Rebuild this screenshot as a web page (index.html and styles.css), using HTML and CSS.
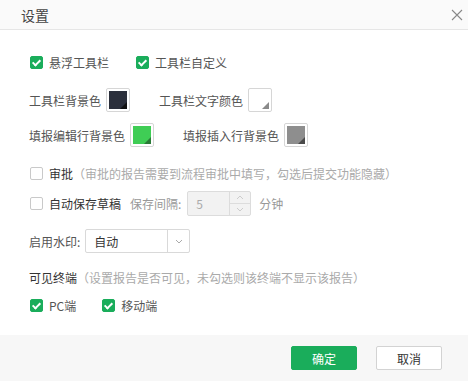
FILE: index.html
```html
<!DOCTYPE html>
<html lang="zh-CN">
<head>
    <meta charset="UTF-8">
    <title>设置</title>
    <link rel="stylesheet" href="styles.css">
</head>
<body>
    <div class="dialog">
        <div class="dialog-header">
            <span class="dialog-title">设置</span>
            <span class="close">
                <svg width="12" height="12" viewBox="0 0 12 12"><path d="M1 1L11 11M11 1L1 11" stroke="#888" stroke-width="1.1" fill="none"/></svg>
            </span>
        </div>
        <div class="dialog-body">
            <div class="row r1">
                <label class="check on"><i class="box"></i>悬浮工具栏</label>
                <label class="check on"><i class="box"></i>工具栏自定义</label>
            </div>
            <div class="row r2">
                <div class="color-item"><span>工具栏背景色</span><span class="swatch"><b class="fill dark"></b></span></div>
                <div class="color-item"><span>工具栏文字颜色</span><span class="swatch"><b class="fill white"></b></span></div>
            </div>
            <div class="row r3">
                <div class="color-item"><span>填报编辑行背景色</span><span class="swatch"><b class="fill green"></b></span></div>
                <div class="color-item"><span>填报插入行背景色</span><span class="swatch"><b class="fill grey"></b></span></div>
            </div>
            <div class="row r4">
                <label class="check"><i class="box"></i><span class="strong">审批</span><span class="hint">（审批的报告需要到流程审批中填写，勾选后提交功能隐藏）</span></label>
            </div>
            <div class="row r5">
                <label class="check"><i class="box"></i><span class="strong">自动保存草稿</span></label>
                <span class="muted">保存间隔:</span>
                <div class="spin">
                    <span class="spin-val">5</span>
                    <span class="spin-btns">
                        <span><svg width="8" height="5" viewBox="0 0 8 5"><path d="M1 4L4 1L7 4" stroke="#ccc" fill="none"/></svg></span>
                        <span><svg width="8" height="5" viewBox="0 0 8 5"><path d="M1 1L4 4L7 1" stroke="#ccc" fill="none"/></svg></span>
                    </span>
                </div>
                <span class="muted">分钟</span>
            </div>
            <div class="row r6">
                <span>启用水印:</span>
                <div class="select">
                    <span class="select-val">自动</span>
                    <span class="select-arrow"><svg width="8" height="5" viewBox="0 0 8 5"><path d="M1 1L4 4L7 1" stroke="#aaa" fill="none"/></svg></span>
                </div>
            </div>
            <div class="row r7">
                <span class="strong">可见终端</span><span class="hint">（设置报告是否可见，未勾选则该终端不显示该报告）</span>
            </div>
            <div class="row r8">
                <label class="check on"><i class="box"></i>PC端</label>
                <label class="check on"><i class="box"></i>移动端</label>
            </div>
        </div>
        <div class="dialog-footer">
            <button class="btn primary">确定</button>
            <button class="btn">取消</button>
        </div>
    </div>
</body>
</html>
```
FILE: styles.css
```css
body {
    margin: 0;
    font-family: "Noto Sans CJK SC", "Noto Sans", sans-serif;
    font-size: 12px;
    color: #555;
    background: #fff;
}

.dialog {
    width: 468px;
    height: 381px;
    display: flex;
    flex-direction: column;
    overflow: hidden;
}

.dialog-header {
    height: 29px;
    flex: none;
    display: flex;
    align-items: center;
    justify-content: space-between;
    padding: 0 5px 0 21px;
    background: #fafafa;
    border-bottom: 1px solid #e6e6e6;
}

.dialog-title {
    font-size: 14px;
    color: #444;
}

.close {
    display: flex;
}

.dialog-body {
    flex: 1;
    padding: 20px 29px 0;
}

.row {
    height: 24px;
    display: flex;
    align-items: center;
}

.r2 { margin-top: 14px; }
.r3 { margin-top: 11px; }
.r4 { margin-top: 14px; }
.r5 { margin-top: 6px; }
.r6 { margin-top: 14px; }
.r7 { margin-top: 12px; }
.r8 { margin-top: 4px; }

.check {
    display: flex;
    align-items: center;
    margin-right: 26px;
}

.box {
    width: 11px;
    height: 11px;
    border: 1px solid #c9c9c9;
    border-radius: 2px;
    margin: 0 6px 0 1px;
    background: #fff;
    position: relative;
}

.check.on .box {
    background: #1aad5b;
    border-color: #1aad5b;
}

.check.on .box::after {
    content: "";
    position: absolute;
    left: 3px;
    top: 1px;
    width: 3px;
    height: 6px;
    border: solid #fff;
    border-width: 0 2px 2px 0;
    transform: rotate(45deg);
}

.r8 .check { margin-right: 25px; }

.strong {
    color: #333;
}

.hint {
    color: #aaa;
}

.muted {
    color: #999;
}

.color-item {
    display: flex;
    align-items: center;
    gap: 5px;
    margin-right: 29px;
}

.swatch {
    width: 18px;
    height: 18px;
    padding: 2px;
    border: 1px solid #d6d6d6;
    border-radius: 2px;
    background: #fff;
    display: flex;
}

.fill {
    flex: 1;
    position: relative;
    overflow: hidden;
}

.fill::after {
    content: "";
    position: absolute;
    right: 0;
    bottom: 0;
    border-style: solid;
    border-width: 0 0 7px 7px;
    border-color: transparent transparent var(--corner) transparent;
}

.fill.dark { background: #2b2f3b; --corner: #111; }
.fill.white { background: #fff; --corner: #8a8a8a; }
.fill.green { background: #3fcd55; --corner: #2a7a37; }
.fill.grey { background: #8e8e8e; --corner: #4a4a4a; }

.r5 .check { margin-right: 9px; }

.spin {
    display: flex;
    height: 23px;
    width: 62px;
    border: 1px solid #dcdcdc;
    border-radius: 2px;
    background: #f2f2f2;
    margin: 0 8px 0 6px;
}

.spin-val {
    flex: 1;
    display: flex;
    align-items: center;
    padding-left: 8px;
    color: #aaa;
}

.spin-btns {
    width: 20px;
    border-left: 1px solid #dcdcdc;
    display: flex;
    flex-direction: column;
}

.spin-btns span {
    flex: 1;
    display: flex;
    align-items: center;
    justify-content: center;
}

.spin-btns span + span {
    border-top: 1px solid #dcdcdc;
}

.select {
    display: flex;
    width: 103px;
    height: 22px;
    border: 1px solid #d9d9d9;
    border-radius: 2px;
    margin-left: 5px;
}

.select-val {
    flex: 1;
    display: flex;
    align-items: center;
    padding-left: 8px;
    color: #333;
}

.select-arrow {
    width: 21px;
    border-left: 1px solid #d9d9d9;
    display: flex;
    align-items: center;
    justify-content: center;
}

.dialog-footer {
    height: 46px;
    flex: none;
    background: #f7f7f7;
    display: flex;
    align-items: center;
    justify-content: flex-end;
    gap: 19px;
    padding-right: 26px;
}

.btn {
    width: 66px;
    height: 24px;
    font-family: inherit;
    font-size: 12px;
    border: 1px solid #d3d3d3;
    border-radius: 2px;
    background: #fff;
    color: #333;
    padding: 0;
}

.btn.primary {
    background: #1aad5b;
    border-color: #1aad5b;
    color: #fff;
}
```
